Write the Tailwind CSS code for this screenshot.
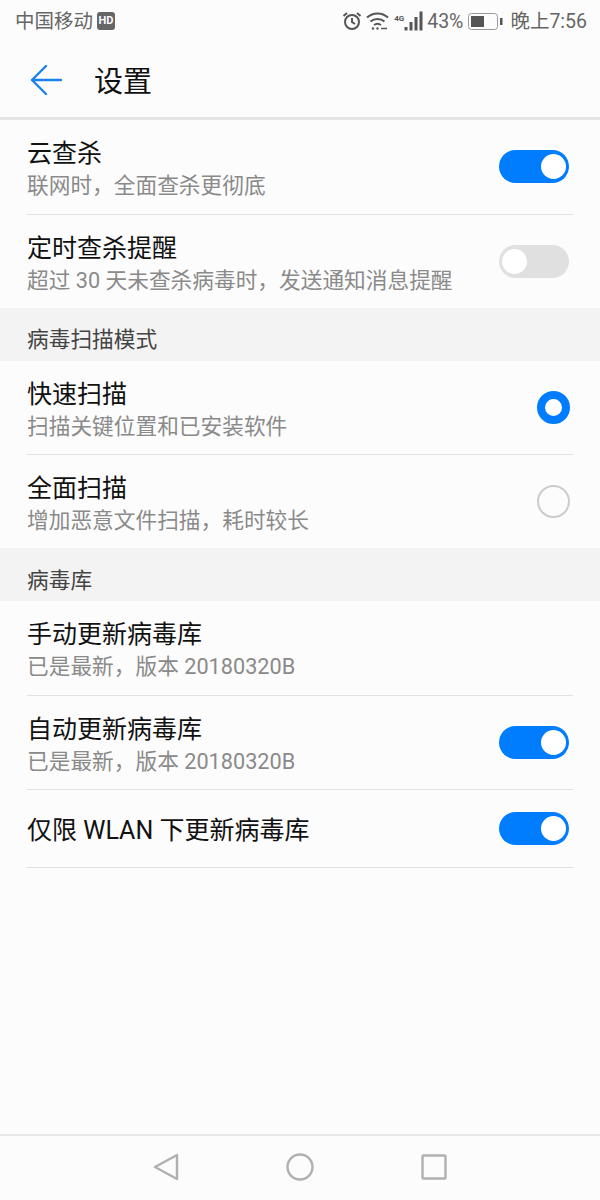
<!DOCTYPE html>
<html lang="zh">
<head>
  <meta charset="UTF-8">
  <title>设置</title>
  <script src="https://cdn.jsdelivr.net/npm/@tailwindcss/browser@4"></script>
</head>
<body class="bg-[#fcfcfc] font-['Roboto','Noto_Sans_CJK_SC',sans-serif]">
<div class="w-[600px] h-[1200px] flex flex-col overflow-hidden">

  <!-- Status bar -->
  <div class="h-[42px] flex items-center justify-between pl-[15px] pr-[13px] pt-[2px] text-[#666] text-[19.5px] shrink-0">
    <div class="flex items-center gap-[4px]">
      <span>中国移动</span>
      <span class="w-[18px] h-[18px] rounded-[3px] bg-[#666] text-[#fcfcfc] text-[11px] font-bold flex items-center justify-center -mt-[2px]">HD</span>
    </div>
    <div class="flex items-center">
      <svg class="w-[20px] h-[20px] -mt-[2px]" viewBox="0 0 20 20" fill="none" stroke="#555" stroke-width="2"><circle cx="10" cy="11" r="7"/><path d="M10 7v4l3 2M1.5 5 5 2M18.5 5 15 2"/></svg>
      <svg class="w-[23px] h-[20px] ml-[4px] -mt-[2px]" viewBox="0 0 23 20" fill="none" stroke="#555" stroke-width="2"><path d="M1 6.5c6-5.5 15-5.500 21 0M4.500 10.500c4-3.500 10-3.500 14 0M8 14c2-1.500 5-1.500 7 0"/><circle cx="7" cy="17.500" r="1.200" fill="#555" stroke="none"/><circle cx="11.500" cy="17.500" r="1.200" fill="#555" stroke="none"/><path d="M15 17.500h6" stroke-width="1.500"/></svg>
      <span class="text-[8px] font-bold text-[#555] self-start mt-[6px] ml-[5px] w-[10px]">4G</span>
      <svg class="w-[20px] h-[20px] -mt-[2px]" viewBox="0 0 20 20" fill="#555"><rect x="0.500" y="16" width="3" height="3.500"/><rect x="5.500" y="11" width="3" height="8.500"/><rect x="10.500" y="6" width="3" height="13.500"/><rect x="15.500" y="0.500" width="3" height="19"/></svg>
      <span class="ml-[3px]">43%</span>
      <svg class="w-[35px] h-[17px] ml-[5px] -mt-[2px]" viewBox="0 0 35 17" fill="none"><rect x="0.500" y="0.500" width="29" height="16" rx="3" stroke="#999"/><rect x="3" y="3" width="13" height="11" fill="#555"/><rect x="32" y="5" width="2.500" height="7" fill="#555"/></svg>
      <span class="ml-[7px]">晚上7:56</span>
    </div>
  </div>

  <!-- Header -->
  <div class="h-[75px] flex items-center shrink-0 border-b-[3px] border-[#e4e4e4] box-content">
    <svg class="w-[32px] h-[32px] ml-[30px]" viewBox="0 0 32 32" fill="none" stroke="#1a82e8" stroke-width="2.4" stroke-linecap="round" stroke-linejoin="round"><path d="M2 16h29M16 2 2 16l14 14"/></svg>
    <span class="ml-[32px] pt-[6px] text-[29px] text-[#111] leading-none">设置</span>
  </div>

  <!-- Scan toggles -->
  <div class="px-[27px] shrink-0">
    <div class="h-[95px] flex items-center justify-between border-b border-[#e2e2e2]">
      <div class="pt-[6px]">
        <div class="text-[25px] leading-[32px] text-[#111]">云查杀</div>
        <div class="text-[21.7px] leading-[32px] text-[#8a8a8a]">联网时，全面查杀更彻底</div>
      </div>
      <div class="w-[70px] h-[33px] rounded-full bg-[#007dff] flex items-center justify-end pr-[3px] mr-[4px] -mt-[1px]"><div class="w-[25px] h-[25px] rounded-full bg-white"></div></div>
    </div>
    <div class="h-[93px] flex items-center justify-between">
      <div class="pt-[6px]">
        <div class="text-[25px] leading-[32px] text-[#111]">定时查杀提醒</div>
        <div class="text-[21.7px] leading-[32px] text-[#8a8a8a]">超过 30 天未查杀病毒时，发送通知消息提醒</div>
      </div>
      <div class="w-[70px] h-[33px] rounded-full bg-[#e0e0e0] flex items-center pl-[3px] mr-[4px] -mt-[1px]"><div class="w-[25px] h-[25px] rounded-full bg-white"></div></div>
    </div>
  </div>

  <div class="h-[53px] shrink-0 bg-[#f3f3f3] pl-[27px] pt-[12px] flex items-center text-[21.7px] text-[#444]">病毒扫描模式</div>

  <!-- Scan mode -->
  <div class="px-[27px] shrink-0">
    <div class="h-[94px] flex items-center justify-between border-b border-[#e2e2e2]">
      <div class="pt-[6px]">
        <div class="text-[25px] leading-[32px] text-[#111]">快速扫描</div>
        <div class="text-[21.7px] leading-[32px] text-[#8a8a8a]">扫描关键位置和已安装软件</div>
      </div>
      <div class="w-[33px] h-[33px] rounded-full border-[8px] border-[#007dff] bg-white mr-[3px]"></div>
    </div>
    <div class="h-[93px] flex items-center justify-between">
      <div class="pt-[6px]">
        <div class="text-[25px] leading-[32px] text-[#111]">全面扫描</div>
        <div class="text-[21.7px] leading-[32px] text-[#8a8a8a]">增加恶意文件扫描，耗时较长</div>
      </div>
      <div class="w-[33px] h-[33px] rounded-full border-2 border-[#cccccc] mr-[3px]"></div>
    </div>
  </div>

  <div class="h-[53px] shrink-0 bg-[#f3f3f3] pl-[27px] pt-[13px] flex items-center text-[21.7px] text-[#444]">病毒库</div>

  <!-- Virus database -->
  <div class="px-[27px] shrink-0">
    <div class="h-[95px] flex items-center border-b border-[#e2e2e2]">
      <div class="pt-[6px]">
        <div class="text-[25px] leading-[32px] text-[#111]">手动更新病毒库</div>
        <div class="text-[21.7px] leading-[32px] text-[#8a8a8a]">已是最新，版本 20180320B</div>
      </div>
    </div>
    <div class="h-[94px] flex items-center justify-between border-b border-[#e2e2e2]">
      <div class="pt-[6px]">
        <div class="text-[25px] leading-[32px] text-[#111]">自动更新病毒库</div>
        <div class="text-[21.7px] leading-[32px] text-[#8a8a8a]">已是最新，版本 20180320B</div>
      </div>
      <div class="w-[70px] h-[33px] rounded-full bg-[#007dff] flex items-center justify-end pr-[3px] mr-[4px] -mt-[1px]"><div class="w-[25px] h-[25px] rounded-full bg-white"></div></div>
    </div>
    <div class="h-[78px] flex items-center justify-between border-b border-[#e2e2e2]">
      <div class="pt-[4px] text-[25px] leading-[32px] text-[#111]">仅限 WLAN 下更新病毒库</div>
      <div class="w-[70px] h-[33px] rounded-full bg-[#007dff] flex items-center justify-end pr-[3px] mr-[4px]"><div class="w-[25px] h-[25px] rounded-full bg-white"></div></div>
    </div>
  </div>

  <!-- Nav bar -->
  <div class="mt-[266px] h-[62px] shrink-0 border-t-2 border-[#e8e8e8] flex items-center justify-center gap-[106px] box-content">
    <svg class="w-[28px] h-[28px]" viewBox="0 0 28 28" fill="none" stroke="#b0b0b0" stroke-width="2.4" stroke-linejoin="round"><path d="M25 2 3 14l22 12z"/></svg>
    <svg class="w-[28px] h-[28px]" viewBox="0 0 28 28" fill="none" stroke="#b0b0b0" stroke-width="2.4"><circle cx="14" cy="14" r="12.500"/></svg>
    <svg class="w-[28px] h-[28px]" viewBox="0 0 28 28" fill="none" stroke="#b0b0b0" stroke-width="2.4" stroke-linejoin="round"><rect x="2.500" y="2.500" width="23" height="23" rx="1"/></svg>
  </div>
</div>
</body>
</html>
